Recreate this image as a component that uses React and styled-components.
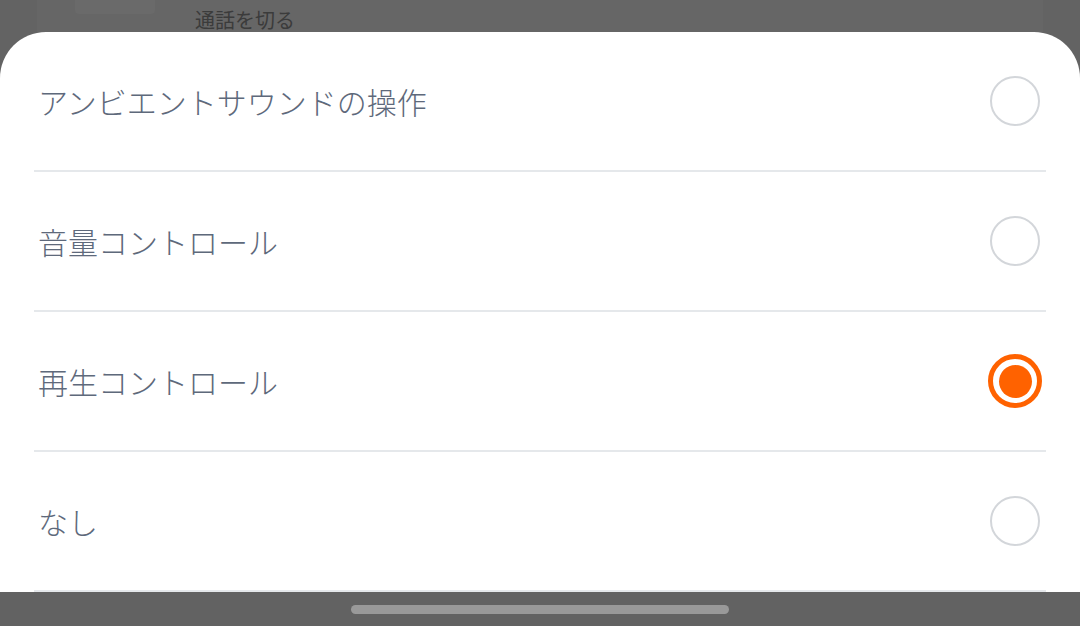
import React from "react";
import styled, { createGlobalStyle } from "styled-components";

const Global = createGlobalStyle`
  html, body { margin: 0; padding: 0; }
  body {
    width: 1080px;
    height: 626px;
    overflow: hidden;
    background: #646464;
    font-family: "Noto Sans CJK JP", "Noto Sans", sans-serif;
  }
`;

const Screen = styled.div`
  width: 1080px;
  height: 626px;
  display: flex;
  flex-direction: column;
  background: #636363;
`;

const Backdrop = styled.div`
  height: 32px;
  flex: none;
  padding: 0 37px;
  display: flex;
`;

const BackCard = styled.div`
  flex: 1;
  background: #666666;
  display: flex;
  align-items: flex-start;
  gap: 40px;
  padding-left: 38px;
`;

const BackButton = styled.div`
  width: 80px;
  height: 14px;
  background: #6a6a6a;
  border-radius: 0 0 4px 4px;
`;

const BackLabel = styled.span`
  font-size: 20px;
  line-height: 40px;
  color: #3b3b3b;
`;

const Sheet = styled.div`
  flex: 1;
  background: #ffffff;
  border-radius: 46px 46px 0 0;
  padding: 0 34px;
  display: flex;
  flex-direction: column;
`;

const Row = styled.div`
  height: 138px;
  flex: none;
  border-bottom: 2px solid #e5e8eb;
  display: flex;
  align-items: center;
  justify-content: space-between;
  padding: 0 0 0 4px;
`;

const Label = styled.span`
  font-size: 30px;
  font-weight: 300;
  color: #5e697b;
`;

const Radio = styled.div`
  width: ${(p) => (p.$checked ? "44px" : "46px")};
  height: ${(p) => (p.$checked ? "44px" : "46px")};
  border-radius: 50%;
  border: ${(p) => (p.$checked ? "5px solid #ff6200" : "2px solid #d3d6da")};
  margin-right: ${(p) => (p.$checked ? "4px" : "6px")};
  display: flex;
  align-items: center;
  justify-content: center;
`;

const Dot = styled.div`
  width: 33px;
  height: 33px;
  border-radius: 50%;
  background: #ff6200;
`;

const NavBar = styled.div`
  height: 34px;
  flex: none;
  background: #626262;
  display: flex;
  justify-content: center;
  align-items: center;
`;

const Handle = styled.div`
  width: 378px;
  height: 9px;
  border-radius: 5px;
  background: #999999;
`;

const options = [
  { label: "アンビエントサウンドの操作", checked: false },
  { label: "音量コントロール", checked: false },
  { label: "再生コントロール", checked: true },
  { label: "なし", checked: false },
];

export default function App() {
  return (
    <>
      <Global />
      <Screen>
        <Backdrop>
          <BackCard>
            <BackButton />
            <BackLabel>通話を切る</BackLabel>
          </BackCard>
        </Backdrop>
        <Sheet>
          {options.map((o) => (
            <Row key={o.label}>
              <Label>{o.label}</Label>
              <Radio $checked={o.checked}>{o.checked && <Dot />}</Radio>
            </Row>
          ))}
        </Sheet>
        <NavBar>
          <Handle />
        </NavBar>
      </Screen>
    </>
  );
}
